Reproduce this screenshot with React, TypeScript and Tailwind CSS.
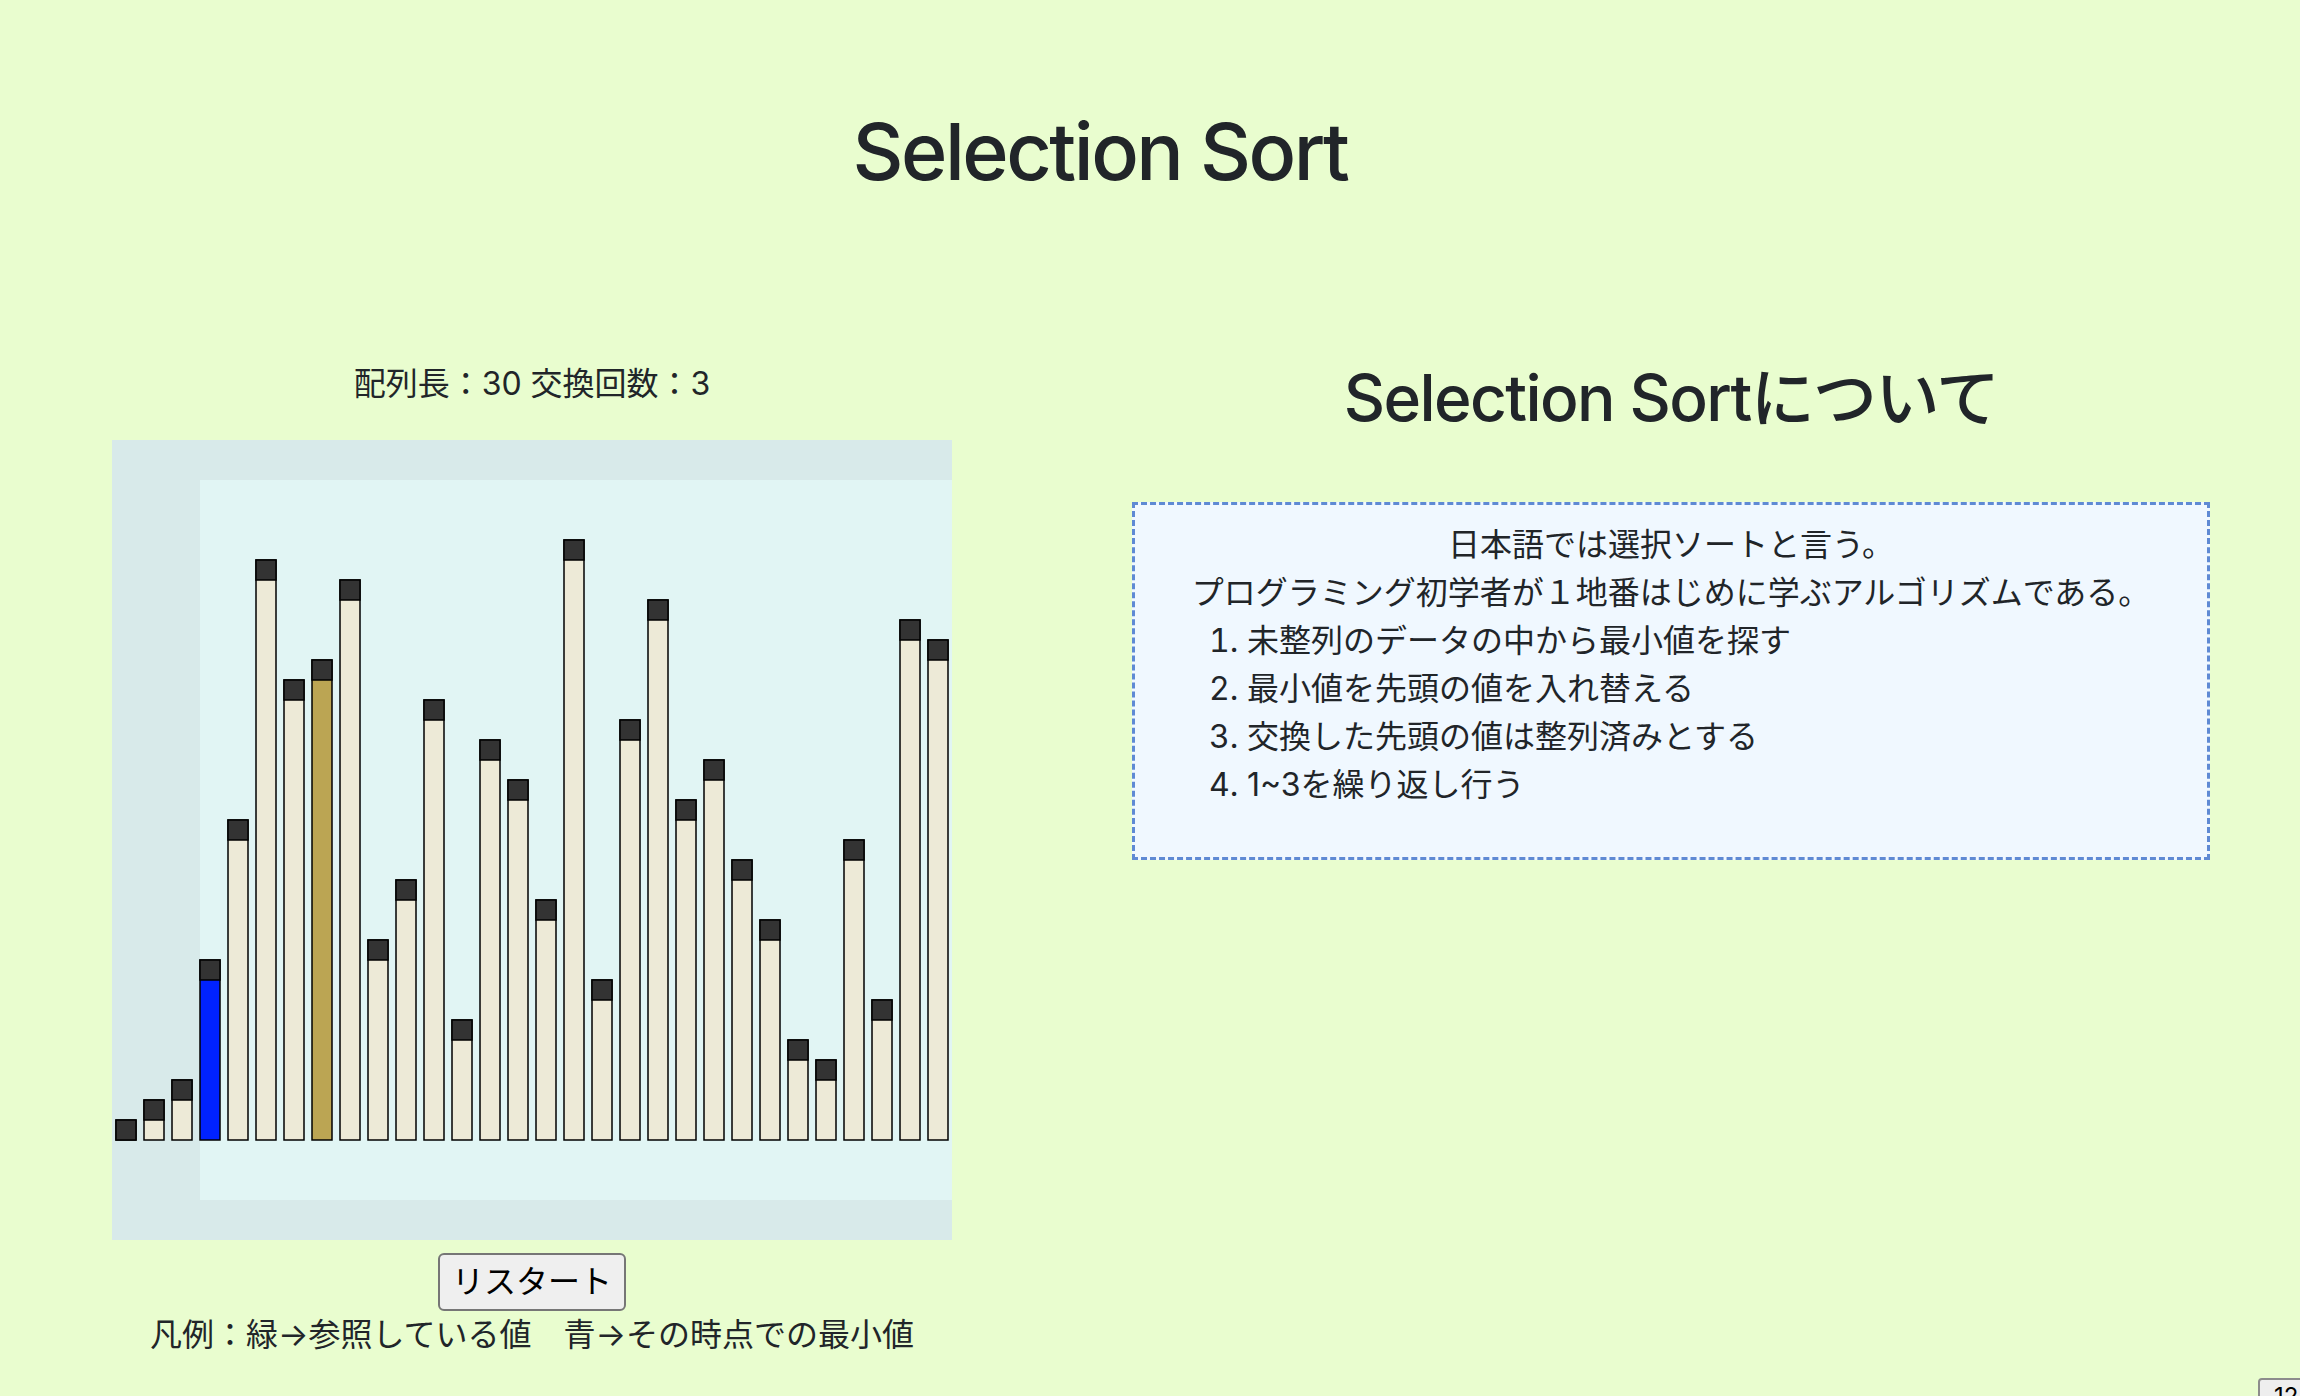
import React from 'react';

const VALUES = [1, 2, 3, 9, 16, 29, 23, 24, 28, 10, 13, 22, 6, 20, 18, 12, 30, 8, 21, 27, 17, 19, 14, 11, 5, 4, 15, 7, 26, 25];
const MIN_INDEX = 3;
const CURRENT_INDEX = 7;

const STEPS = [
  '未整列のデータの中から最小値を探す',
  '最小値を先頭の値を入れ替える',
  '交換した先頭の値は整列済みとする',
  '1~3を繰り返し行う',
];

function barColor(idx: number) {
  if (idx === MIN_INDEX) return '#0022ff';
  if (idx === CURRENT_INDEX) return '#bba553';
  return '#edead7';
}

function SortChart() {
  const unit = 20;
  const base = 700;
  return (
    <svg width={840} height={800} className="block">
      <rect x={0} y={0} width={840} height={800} fill="#d8eaea" />
      <rect x={88} y={40} width={752} height={720} fill="#e1f5f4" />
      {VALUES.map((v, idx) => {
        const x = idx * 28 + 4;
        const h = v * unit;
        return (
          <g key={idx} stroke="#000" strokeWidth={1.5}>
            <rect x={x} y={base - h} width={20} height={h} fill={barColor(idx)} />
            <rect x={x} y={base - h} width={20} height={unit} fill="#333333" />
          </g>
        );
      })}
    </svg>
  );
}

export default function App() {
  return (
    <div className="relative h-[1396px] w-[2300px] overflow-hidden bg-[#e9fdcf] font-['Inter','Noto_Sans_CJK_JP',sans-serif] text-[#212529]">
      {/* Title */}
      <h1 className="pt-[104px] pr-[100px] text-center text-[79px] font-medium leading-[1.2] tracking-[-2.5px]">
        Selection Sort
      </h1>

      <div className="mt-[161px] flex">
        {/* Visualizer */}
        <div className="ml-[112px] flex w-[840px] flex-col items-center">
          <p className="text-[32px] leading-[48px]">配列長：30 交換回数：3</p>
          <div className="mt-[32px]">
            <SortChart />
          </div>
          <button className="mt-[13px] h-[58px] w-[188px] rounded-[6px] border-2 border-[#767676] bg-[#efefef] text-[32px] leading-[48px] text-black">
            リスタート
          </button>
          <p className="text-[32px] leading-[48px]">凡例：緑→参照している値　青→その時点での最小値</p>
        </div>

        {/* Description */}
        <div className="ml-[180px] w-[1078px]">
          <h2 className="text-center text-[64px] font-medium leading-[1.2] tracking-[-1.6px]">
            Selection Sortについて
          </h2>
          <div className="mt-[65px] border-[3px] border-dashed border-[#5f8ad4] bg-[#f0f8ff] px-[16px] pt-[16px] pb-[16px] text-[32px] leading-[48px]">
            <p className="text-center">日本語では選択ソートと言う。</p>
            <p className="text-center">プログラミング初学者が１地番はじめに学ぶアルゴリズムである。</p>
            <ol className="mb-[32px] list-decimal pl-[96px]">
              {STEPS.map((step, idx) => (
                <li key={idx}>{step}</li>
              ))}
            </ol>
          </div>
        </div>
      </div>

      {/* Corner widget, mostly off-screen */}
      <div className="absolute left-[2258px] top-[1378px] h-[40px] w-[80px] rounded-[4px] border-2 border-[#8c8c8c] bg-[#eeeeee] pl-[14px] text-[24px] leading-[34px] text-black">
        12
      </div>
    </div>
  );
}
